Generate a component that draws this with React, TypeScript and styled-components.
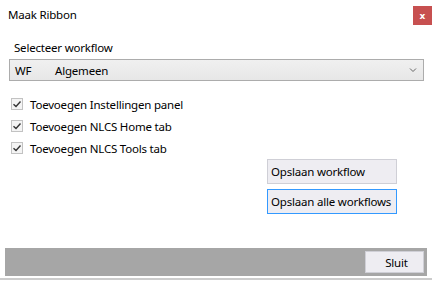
import React from "react";
import styled, { createGlobalStyle } from "styled-components";

const Global = createGlobalStyle`
  html, body { margin: 0; padding: 0; background: #ffffff; }
  body { font-family: "Noto Sans", "Open Sans", sans-serif; font-size: 11.5px; letter-spacing: -0.2px; color: #000; }
  * { box-sizing: border-box; }
`;

const Window = styled.div`
  width: 432px;
  height: 281px;
  position: relative;
  display: flex;
  flex-direction: column;
  background: #fff;
  overflow: hidden;
  white-space: nowrap;
`;

const TitleBar = styled.div`
  height: 31px;
  display: flex;
  align-items: flex-start;
  justify-content: space-between;
  padding-left: 8px;
`;

const Title = styled.div`
  font-size: 11.5px;
  line-height: 14px;
  margin-top: 8px;
  color: #000;
`;

const Close = styled.div`
  width: 19px;
  height: 19px;
  margin-top: 6px;
  background: #c75050;
  color: #fff;
  font-family: "DejaVu Sans", sans-serif;
  font-weight: bold;
  font-size: 9px;
  letter-spacing: 0;
  display: flex;
  align-items: center;
  justify-content: center;
`;

const Body = styled.div`
  padding: 0 8px 0 9px;
  display: flex;
  flex-direction: column;
`;

const Label = styled.div`
  margin-left: 5px;
  margin-top: 9px;
  line-height: 16px;
  height: 19px;
`;

const Select = styled.div`
  width: 415px;
  height: 22px;
  border: 1px solid #acacac;
  background: linear-gradient(#f0f0f0, #e7e7e7);
  display: flex;
  align-items: center;
  padding: 0 6px 0 5px;
`;

const Code = styled.span`
  width: 40px;
`;

const Chevron = styled.svg`
  margin-left: auto;
`;

const Checks = styled.div`
  display: flex;
  flex-direction: column;
  gap: 6px;
  margin-top: 15px;
  margin-left: 2px;
`;

const CheckRow = styled.div`
  display: flex;
  align-items: center;
  height: 16px;
  gap: 7px;
`;

const Box = styled.div`
  width: 12px;
  height: 12px;
  border: 1px solid #c2c2c2;
  background: #f4f4f4;
  display: flex;
  align-items: center;
  justify-content: center;
`;

const Actions = styled.div`
  display: flex;
  flex-direction: column;
  align-items: flex-start;
  gap: 5px;
  margin-left: 258px;
  margin-top: 3px;
`;

const Button = styled.div<{ $focus?: boolean }>`
  width: 130px;
  height: 25px;
  border: 1px solid ${(p) => (p.$focus ? "#3399ff" : "#cfcfd6")};
  background: #eeedf2;
  display: flex;
  align-items: center;
  padding-left: 3px;
`;

const Footer = styled.div`
  margin: auto 5px 0 5px;
  height: 28px;
  background: #a6a6a6;
  display: flex;
  align-items: center;
  justify-content: flex-end;
  padding-right: 3px;
`;

const CloseButton = styled.div`
  width: 59px;
  height: 22px;
  background: #eeedf2;
  border: 1px solid #cfcfd6;
  display: flex;
  align-items: center;
  justify-content: center;
  padding-left: 4px;
`;

const BottomLine = styled.div`
  height: 3px;
  margin-top: 2px;
  border-top: 2px solid #cccccc;
`;

const Check = () => (
  <svg width="10" height="10" viewBox="0 0 10 10">
    <path d="M1.5 5.2 L4 7.5 L8.5 2.5" fill="none" stroke="#333" strokeWidth="1.4" />
  </svg>
);

const items = [
  "Toevoegen Instellingen panel",
  "Toevoegen NLCS Home tab",
  "Toevoegen NLCS Tools tab",
];

export default function App() {
  return (
    <>
      <Global />
      <Window>
        <TitleBar>
          <Title>Maak Ribbon</Title>
          <Close>x</Close>
        </TitleBar>
        <Body>
          <Label>Selecteer workflow</Label>
          <Select>
            <Code>WF</Code>
            <span>Algemeen</span>
            <Chevron width="8" height="6" viewBox="0 0 8 6">
              <path d="M1 1.5 L4 4.5 L7 1.5" fill="none" stroke="#666" strokeWidth="1" />
            </Chevron>
          </Select>
          <Checks>
            {items.map((t) => (
              <CheckRow key={t}>
                <Box>
                  <Check />
                </Box>
                <span>{t}</span>
              </CheckRow>
            ))}
          </Checks>
          <Actions>
            <Button>Opslaan workflow</Button>
            <Button $focus>Opslaan alle workflows</Button>
          </Actions>
        </Body>
        <Footer>
          <CloseButton>Sluit</CloseButton>
        </Footer>
        <BottomLine />
      </Window>
    </>
  );
}
